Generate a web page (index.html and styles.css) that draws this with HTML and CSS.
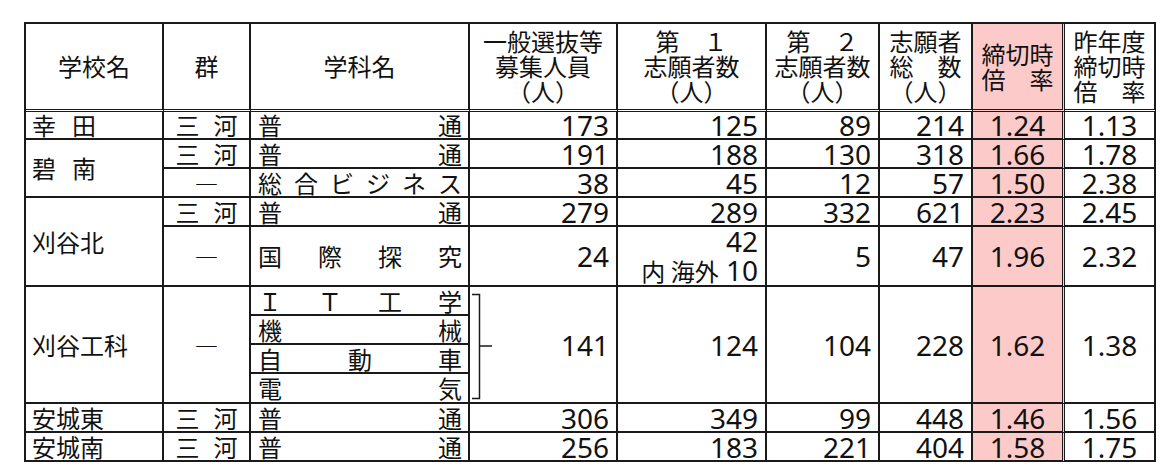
FILE: index.html
```html
<!DOCTYPE html>
<html lang="ja">
<head>
<meta charset="utf-8">
<title>志願者数</title>
<link rel="stylesheet" href="styles.css">
</head>
<body>
<table class="t">
  <colgroup>
    <col class="c1"><col class="c2"><col class="c3"><col class="c4"><col class="c5"><col class="c6"><col class="c7"><col class="c8"><col class="c9">
  </colgroup>
  <thead>
    <tr class="hr">
      <th>学校名</th>
      <th>群</th>
      <th>学科名</th>
      <th>一般選抜等<br>募集人員<br>（人）</th>
      <th>第　１<br>志願者数<br>（人）</th>
      <th>第　２<br>志願者数<br>（人）</th>
      <th>志願者<br>総　数<br>（人）</th>
      <th class="pk">締切時<br>倍　率</th>
      <th>昨年度<br>締切時<br>倍　率</th>
    </tr>
  </thead>
  <tbody>
    <tr class="r28">
      <td class="sc"><div class="sp"><span>幸</span><span>田</span></div></td>
      <td class="gr"><div class="gp"><span>三</span><span>河</span></div></td>
      <td class="dp"><div class="jt"><span>普</span><span>通</span></div></td>
      <td class="num">173</td><td class="num">125</td><td class="num">89</td><td class="num">214</td>
      <td class="rt pk">1.24</td><td class="rt">1.13</td>
    </tr>
    <tr class="r29">
      <td class="sc" rowspan="2"><div class="sp"><span>碧</span><span>南</span></div></td>
      <td class="gr"><div class="gp"><span>三</span><span>河</span></div></td>
      <td class="dp"><div class="jt"><span>普</span><span>通</span></div></td>
      <td class="num">191</td><td class="num">188</td><td class="num">130</td><td class="num">318</td>
      <td class="rt pk">1.66</td><td class="rt">1.78</td>
    </tr>
    <tr class="r29">
      <td class="gr">―</td>
      <td class="dp"><div class="jt"><span>総</span><span>合</span><span>ビ</span><span>ジ</span><span>ネ</span><span>ス</span></div></td>
      <td class="num">38</td><td class="num">45</td><td class="num">12</td><td class="num">57</td>
      <td class="rt pk">1.50</td><td class="rt">2.38</td>
    </tr>
    <tr class="r29">
      <td class="sc" rowspan="2">刈谷北</td>
      <td class="gr"><div class="gp"><span>三</span><span>河</span></div></td>
      <td class="dp"><div class="jt"><span>普</span><span>通</span></div></td>
      <td class="num">279</td><td class="num">289</td><td class="num">332</td><td class="num">621</td>
      <td class="rt pk">2.23</td><td class="rt">2.45</td>
    </tr>
    <tr class="r58">
      <td class="gr">―</td>
      <td class="dp"><div class="jt"><span>国</span><span>際</span><span>探</span><span>究</span></div></td>
      <td class="num">24</td>
      <td class="num two"><div>42</div><div><span class="jp">内 海外</span> 10</div></td>
      <td class="num">5</td><td class="num">47</td>
      <td class="rt pk">1.96</td><td class="rt">2.32</td>
    </tr>
    <tr class="r29">
      <td class="sc" rowspan="4">刈谷工科</td>
      <td class="gr" rowspan="4">―</td>
      <td class="dp"><div class="jt"><span>Ｉ</span><span>Ｔ</span><span>工</span><span>学</span></div></td>
      <td class="num brk" rowspan="4">141
        <svg class="bracket" width="26" height="110" viewBox="0 0 26 110" aria-hidden="true"><path d="M2 1.5 H9.5 V105.5 H2 M9.5 53 H22" fill="none" stroke="#1a1a1a" stroke-width="1.5"/></svg>
      </td>
      <td class="num" rowspan="4">124</td><td class="num" rowspan="4">104</td><td class="num" rowspan="4">228</td>
      <td class="rt pk" rowspan="4">1.62</td><td class="rt" rowspan="4">1.38</td>
    </tr>
    <tr class="r29">
      <td class="dp"><div class="jt"><span>機</span><span>械</span></div></td>
    </tr>
    <tr class="r29">
      <td class="dp"><div class="jt"><span>自</span><span>動</span><span>車</span></div></td>
    </tr>
    <tr class="r30">
      <td class="dp"><div class="jt"><span>電</span><span>気</span></div></td>
    </tr>
    <tr class="r29">
      <td class="sc">安城東</td>
      <td class="gr"><div class="gp"><span>三</span><span>河</span></div></td>
      <td class="dp"><div class="jt"><span>普</span><span>通</span></div></td>
      <td class="num">306</td><td class="num">349</td><td class="num">99</td><td class="num">448</td>
      <td class="rt pk">1.46</td><td class="rt">1.56</td>
    </tr>
    <tr class="r29">
      <td class="sc">安城南</td>
      <td class="gr"><div class="gp"><span>三</span><span>河</span></div></td>
      <td class="dp"><div class="jt"><span>普</span><span>通</span></div></td>
      <td class="num">256</td><td class="num">183</td><td class="num">221</td><td class="num">404</td>
      <td class="rt pk">1.58</td><td class="rt">1.75</td>
    </tr>
  </tbody>
</table>
</body>
</html>
```
FILE: styles.css
```css
* { box-sizing: border-box; }
html, body { margin: 0; background: #fff; }
body {
  padding: 22px 0 0 24px;
  font-family: "Noto Sans CJK JP", "Noto Sans", sans-serif;
  color: #111;
}
.t {
  border-collapse: separate;
  border-spacing: 0;
  table-layout: fixed;
  width: 1132px;
  border-left: 2px solid #1a1a1a;
  border-top: 2px solid #1a1a1a;
}
.c1 { width: 138px; }
.c2 { width: 87px; }
.c3 { width: 219px; }
.c4 { width: 148px; }
.c5 { width: 149px; }
.c6 { width: 113px; }
.c7 { width: 93px; }
.c8 { width: 92px; }
.c9 { width: 91px; }

th, td {
  padding: 0;
  border-right: 2px solid #1a1a1a;
  border-bottom: 2px solid #1a1a1a;
  vertical-align: middle;
  font-size: 24px;
  line-height: 26px;
  font-weight: normal;
  white-space: nowrap;
}
th {
  border-bottom: 3px double #1a1a1a;
  text-align: center;
  line-height: 25px;
  padding-bottom: 2px;
}
.hr { height: 88px; }
.r28 { height: 28px; }
.r29 { height: 29px; }
.r30 { height: 30px; }
.r58 { height: 58px; }

.pk { background: #fdcaca; border-right: 3px double #1a1a1a; }

.sc { padding-left: 6px; }
.sp { display: flex; gap: 16px; }
.gr { text-align: center; }
.gp { display: flex; justify-content: center; gap: 14px; }
.dp { padding: 0 6px 0 7px; }
.jt { display: flex; justify-content: space-between; }

.num {
  font-family: "Noto Sans", "Noto Sans CJK JP", sans-serif;
  font-size: 28px;
  line-height: 26px;
  text-align: right;
  padding-right: 7px;
}
.num.two { line-height: 29px; }
.num .jp {
  font-family: "Noto Sans CJK JP", sans-serif;
  font-size: 24px;
}
.rt {
  font-family: "Noto Sans", "Noto Sans CJK JP", sans-serif;
  font-size: 28px;
  line-height: 26px;
  text-align: center;
}
.brk { position: relative; }
.bracket {
  position: absolute;
  left: 0;
  top: 6px;
}
```
